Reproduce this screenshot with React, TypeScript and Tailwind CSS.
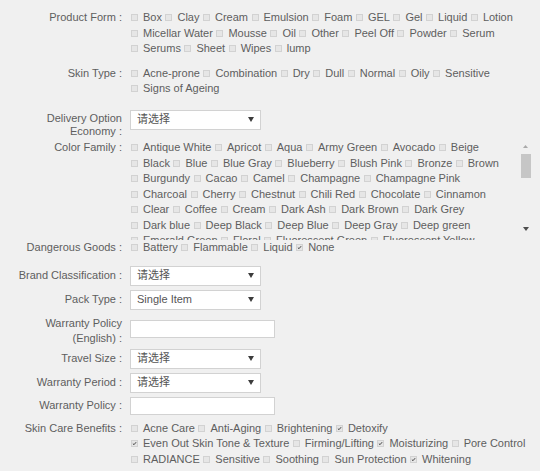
import React from "react";

type Opt = { label: string; checked?: boolean };

const o = (label: string, checked = false): Opt => ({ label, checked });

// option lines are laid out as they wrap in the original form
const productForm: Opt[][] = [
  ["Box", "Clay", "Cream", "Emulsion", "Foam", "GEL", "Gel", "Liquid", "Lotion"].map((l) => o(l)),
  ["Micellar Water", "Mousse", "Oil", "Other", "Peel Off", "Powder", "Serum"].map((l) => o(l)),
  ["Serums", "Sheet", "Wipes", "lump"].map((l) => o(l)),
];

const skinType: Opt[][] = [
  ["Acne-prone", "Combination", "Dry", "Dull", "Normal", "Oily", "Sensitive"].map((l) => o(l)),
  [o("Signs of Ageing")],
];

const colorFamily: Opt[][] = [
  ["Antique White", "Apricot", "Aqua", "Army Green", "Avocado", "Beige"],
  ["Black", "Blue", "Blue Gray", "Blueberry", "Blush Pink", "Bronze", "Brown"],
  ["Burgundy", "Cacao", "Camel", "Champagne", "Champagne Pink"],
  ["Charcoal", "Cherry", "Chestnut", "Chili Red", "Chocolate", "Cinnamon"],
  ["Clear", "Coffee", "Cream", "Dark Ash", "Dark Brown", "Dark Grey"],
  ["Dark blue", "Deep Black", "Deep Blue", "Deep Gray", "Deep green"],
  ["Emerald Green", "Floral", "Fluorescent Green", "Fluorescent Yellow"],
  ["Gold", "Gray", "Green", "Grey", "Ivory", "Khaki"],
].map((row) => row.map((l) => o(l)));

const dangerous: Opt[][] = [[o("Battery"), o("Flammable"), o("Liquid"), o("None", true)]];

const skinCare: Opt[][] = [
  [o("Acne Care"), o("Anti-Aging"), o("Brightening"), o("Detoxify", true)],
  [o("Even Out Skin Tone & Texture", true), o("Firming/Lifting"), o("Moisturizing", true), o("Pore Control")],
  [o("RADIANCE"), o("Sensitive"), o("Soothing"), o("Sun Protection"), o("Whitening", true)],
];

function Box({ checked }: { checked?: boolean }) {
  return (
    <span className="mr-[5px] flex h-[7px] w-[7px] shrink-0 items-center justify-center border border-[#d2d2d2] bg-[#e6e6e6]">
      {checked && (
        <svg width="7" height="7" viewBox="0 0 7 7" className="block">
          <path d="M1.2 3.6 L2.8 5.2 L5.8 1.6" fill="none" stroke="#3a3a3a" strokeWidth="1.3" />
        </svg>
      )}
    </span>
  );
}

function Options({ rows }: { rows: Opt[][] }) {
  return (
    <div className="ml-[1px] flex flex-col">
      {rows.map((row, i) => (
        <div key={i} className="flex h-[15.5px] items-center gap-x-[3.5px] whitespace-nowrap">
          {row.map((opt) => (
            <span key={opt.label} className="flex items-center">
              <Box checked={opt.checked} />
              {opt.label}
            </span>
          ))}
        </div>
      ))}
    </div>
  );
}

function Select({ value }: { value: string }) {
  return (
    <div className="flex h-[20px] w-[131px] items-center justify-between border border-[#d2d2d2] bg-white pl-[6px] pr-[6px] text-[11px] text-[#555]">
      <span>{value}</span>
      <svg width="6" height="5" viewBox="0 0 6 5">
        <path d="M0 0 H6 L3 5 Z" fill="#3c3c3c" />
      </svg>
    </div>
  );
}

function TextInput() {
  return <div className="h-[18px] w-[145px] border border-[#d2d2d2] bg-white" />;
}

function Label({ text, className = "" }: { text: string; className?: string }) {
  return <div className={`w-[122px] shrink-0 text-right ${className}`}>{text} :</div>;
}

export default function App() {
  return (
    <div className="min-h-[471px] w-[540px] bg-[#f0f0f0] pt-[10px] font-['Liberation_Sans','Noto_Sans_CJK_SC',Arial,sans-serif] text-[11px] leading-[15.5px] text-[#5e5e5e]">
      {/* Product Form */}
      <div className="flex">
        <Label text="Product Form" />
        <div className="ml-[8px]">
          <Options rows={productForm} />
        </div>
      </div>

      {/* Skin Type */}
      <div className="mt-[9px] flex">
        <Label text="Skin Type" />
        <div className="ml-[8px]">
          <Options rows={skinType} />
        </div>
      </div>

      {/* Delivery Option Economy */}
      <div className="mt-[13px] flex items-start">
        <Label text="Delivery Option Economy" className="pt-[2px] leading-[13px]" />
        <div className="ml-[8px]">
          <Select value="请选择" />
        </div>
      </div>

      {/* Color Family: scrolled list, last line half hidden */}
      <div className="mt-[2.5px] flex">
        <Label text="Color Family" />
        <div className="ml-[8px] flex items-start">
          <div className="h-[100px] w-[390px] overflow-hidden">
            <Options rows={colorFamily} />
          </div>
          <div className="flex h-[96px] w-[11px] flex-col items-center">
            <div className="flex h-[12px] items-center justify-center">
              <svg width="5" height="3" viewBox="0 0 5 3">
                <path d="M0 3 H5 L2.5 0 Z" fill="#a9a9a9" />
              </svg>
            </div>
            <div className="mt-[1.5px] h-[24px] w-[10px] bg-[#c6c6c6]" />
            <div className="flex-1" />
            <div className="flex h-[15px] items-center justify-center">
              <svg width="6" height="4" viewBox="0 0 6 4">
                <path d="M0 0 H6 L3 4 Z" fill="#4e4e4e" />
              </svg>
            </div>
          </div>
        </div>
      </div>

      {/* Dangerous Goods */}
      <div className="flex">
        <Label text="Dangerous Goods" />
        <div className="ml-[8px]">
          <Options rows={dangerous} />
        </div>
      </div>

      <div className="mt-[10px] flex items-center">
        <Label text="Brand Classification" />
        <div className="ml-[8px]">
          <Select value="请选择" />
        </div>
      </div>

      <div className="mt-[4px] flex items-center">
        <Label text="Pack Type" />
        <div className="ml-[8px]">
          <Select value="Single Item" />
        </div>
      </div>

      <div className="mt-[6px] flex items-start">
        <div className="w-[122px] shrink-0 text-right leading-[15px]">
          Warranty Policy
          <br />
          (English) :
        </div>
        <div className="ml-[8px] pt-[4px]">
          <TextInput />
        </div>
      </div>

      <div className="mt-[3px] flex items-center">
        <Label text="Travel Size" />
        <div className="ml-[8px]">
          <Select value="请选择" />
        </div>
      </div>

      <div className="mt-[4px] flex items-center">
        <Label text="Warranty Period" />
        <div className="ml-[8px]">
          <Select value="请选择" />
        </div>
      </div>

      <div className="mt-[4px] flex items-center">
        <Label text="Warranty Policy" />
        <div className="ml-[8px]">
          <TextInput />
        </div>
      </div>

      {/* Skin Care Benefits */}
      <div className="mt-[6px] flex">
        <Label text="Skin Care Benefits" />
        <div className="ml-[8px]">
          <Options rows={skinCare} />
        </div>
      </div>
    </div>
  );
}
